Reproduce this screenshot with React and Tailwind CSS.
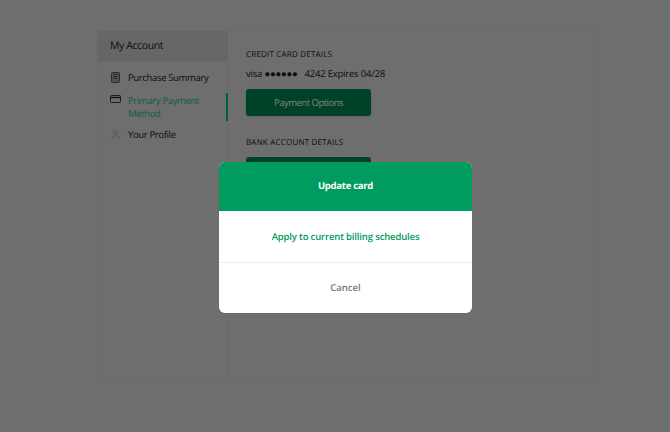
import { User } from 'lucide-react';

function BookIcon() {
  return (
    <svg width="9" height="11" viewBox="0 0 9 11" fill="none" stroke="#333" strokeWidth="0.8" className="mt-[1px] ml-[1px] shrink-0">
      <rect x="0.5" y="0.5" width="8" height="10" rx="1" fill="#888" />
      <path d="M2.5 2.5h4M2.5 4.5h4M2.5 6.5h4" />
    </svg>
  );
}

function CardIcon() {
  return (
    <svg width="11" height="8" viewBox="0 0 11 8" fill="none" stroke="#1c1c1c" strokeWidth="0.9" className="shrink-0">
      <rect x="0.5" y="0.5" width="10" height="7" rx="1" />
      <path d="M0.5 2.5h10" strokeWidth="1.4" />
    </svg>
  );
}

export default function App() {
  return (
    <div className="relative h-[432px] w-[670px] overflow-hidden bg-[#b4b7bb] pt-[30px] pl-[97px] font-['Open_Sans',sans-serif] [text-rendering:geometricPrecision]">
      <div className="flex h-[348px] w-[497px] rounded-[4px] border border-[#b0b1b2] bg-[#b7b7b7]">
        <div className="w-[130px] shrink-0 border-r border-[#adadad]">
          <div className="flex h-[31px] items-center rounded-tl-[4px] bg-[#aaaaaa] pl-3 text-[10.5px] tracking-[-0.4px] text-[#141414]">My Account</div>
          <div className="relative flex flex-col">
            <div className="mt-[9px] flex items-start gap-[8px] pl-3">
              <BookIcon />
              <span className="text-[9.5px] leading-[14px] tracking-[-0.35px] text-[#141414]">Purchase Summary</span>
            </div>
            <div className="mt-[10px] flex items-start gap-[7px] pl-3">
              <CardIcon />
              <span className="w-[84px] text-[9.5px] leading-[12.5px] tracking-[-0.35px] text-[#1f9a6c]">Primary Payment Method</span>
            </div>
            <div className="mt-[8px] flex items-start gap-[7px] pl-3">
              <User size={11} strokeWidth={1.2} color="#777" className="mt-[1px] shrink-0" />
              <span className="text-[9.5px] leading-[14px] tracking-[-0.35px] text-[#141414]">Your Profile</span>
            </div>
            <div className="absolute right-[-1px] top-[31px] h-[28px] w-[2px] bg-[#009f64]" />
          </div>
        </div>
        <div className="flex-1 pl-[18px] pt-[18px]">
          <div className="text-[8px] leading-[12px] tracking-[0.2px] text-[#141414]">CREDIT CARD DETAILS</div>
          <div className="mt-[6px] text-[9.5px] leading-[14px] tracking-[-0.2px] text-[#141414]">visa ●●●●●●&nbsp;&nbsp; 4242 Expires 04/28</div>
          <div className="mt-[8px] flex h-[27px] w-[125px] items-center justify-center rounded-[3px] bg-[#006e43] pt-[1px] text-[9.5px] tracking-[-0.5px] text-[#d6d6d6] shadow-sm">Payment Options</div>
          <div className="mt-[21px] text-[8px] leading-[12px] tracking-[0.2px] text-[#141414]">BANK ACCOUNT DETAILS</div>
          <div className="mt-[8px] h-[27px] w-[125px] rounded-[3px] bg-[#006e43]" />
        </div>
      </div>

      <div className="absolute inset-0 bg-black/40" />

      <div className="absolute left-[219px] top-[162px] w-[253px] overflow-hidden rounded-[6px] bg-white">
        <div className="flex h-[49px] items-center justify-center bg-[#009b5f] text-[9.5px] font-bold tracking-[-0.27px] text-white">Update card</div>
        <div className="flex h-[52px] items-center justify-center border-b border-[#eeeeee] pt-[1px] text-[9.5px] font-semibold tracking-[-0.15px] text-[#009b5f]">Apply to current billing schedules</div>
        <div className="flex h-[50px] items-center justify-center text-[9.5px] font-semibold text-[#777]">Cancel</div>
      </div>
    </div>
  );
}
